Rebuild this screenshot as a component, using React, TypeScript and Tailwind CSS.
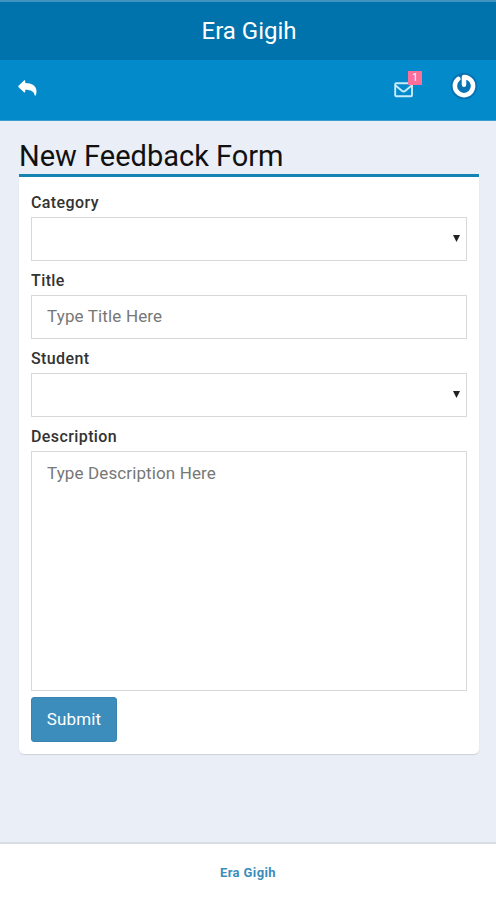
import type { ReactNode } from 'react'

const ReplyIcon = () => (
    <svg className="h-4 w-[19px] fill-white" viewBox="0 0 19 16">
        <path d="M6 .6c.6-.5 1.2-.2 1.2.5v2c6.600 0 11.300 2.900 11.300 8.200 0 1.400-.2 2.800-.6 4-.2.5-1.200.4-1.300-.2-.5-3.500-3.300-5.300-9.400-5.400v2.100c0 .7-.6 1-1.200.5L.6 7.200c-.5-.4-.5-1 0-1.400z" />
    </svg>
)

const EnvelopeIcon = () => (
    <svg className="h-[19px] w-[19px]" viewBox="0 0 19 19" fill="none" stroke="#c9ecfb" strokeWidth="1.9" strokeLinejoin="round">
        <rect x="1.2" y="3.2" width="16.8" height="13" rx="1" />
        <path d="M1.6 5.6l6.2 5.2q1.8 1.4 3.6 0l6.2-5.2" />
    </svg>
)

const AvatarIcon = () => (
    <svg className="h-7 w-7" viewBox="0 0 28 28" fill="none">
        <circle cx="14" cy="14" r="13.3" fill="#0872b3" />
        <path d="M14 12.8V4.9A9.1 9.1 0 1 1 8.400 6.800" stroke="#fff" strokeWidth="4.5" strokeLinecap="round" strokeLinejoin="round" />
    </svg>
)

const Field = ({ label, children }: { label: string; children: ReactNode }) => (
    <label className="block">
        <span className="mb-[3px] block text-base leading-[22px] font-medium tracking-[0.4px] text-[#333]">{label}</span>
        {children}
    </label>
)

const SelectBox = () => (
    <div className="relative">
        <select className="block h-11 w-full appearance-none border border-[#d6d8da] bg-white px-4" />
        <svg className="pointer-events-none absolute top-[18px] right-[7px] h-[7px] w-[7px] fill-[#222]" viewBox="0 0 7 7">
            <path d="M0 0h7L3.5 7z" />
        </svg>
    </div>
)

const App = () => {
    return (
        <div className="flex h-screen flex-col bg-[#eaeef6] font-['Roboto',sans-serif]">
            <header className="shrink-0 text-white">
                <div className="h-[60px] border-t-2 border-[#3f93c0] bg-[#0073ad] pl-[2px] text-center text-2xl leading-[58px]">
                    Era Gigih
                </div>
                <nav className="flex h-[61px] items-start justify-between border-b border-[#3b9dce] bg-[#038aca] px-[18px]">
                    <button className="mt-5" aria-label="Back">
                        <ReplyIcon />
                    </button>
                    <div className="flex items-start">
                        <button className="relative mt-5 mr-[37px]" aria-label="Messages">
                            <EnvelopeIcon />
                            <span className="absolute -top-[9px] left-[14px] h-[14px] w-[14px] bg-[#fb6f98] text-center text-[10px] leading-[14px]">
                                1
                            </span>
                        </button>
                        <button className="mt-3" aria-label="Account">
                            <AvatarIcon />
                        </button>
                    </div>
                </nav>
            </header>

            <main className="flex-1 pt-[18px] pr-[17px] pl-[19px]">
                <h1 className="h-[35px] text-[29px] leading-[35px] text-[#111]">New Feedback Form</h1>

                <form className="h-[580px] rounded-b-[5px] border-t-[3px] border-[#1484b2] bg-white px-3 pt-[15px] shadow-[0_1px_1px_rgba(0,0,0,0.12)]">
                    <div className="grid gap-[9px]">
                        <Field label="Category">
                            <SelectBox />
                        </Field>
                        <Field label="Title">
                            <input
                                className="block h-11 w-full border border-[#d6d8da] px-[15px] pb-[2px] text-[17px] tracking-[0.15px] placeholder:text-[#777]"
                                placeholder="Type Title Here"
                            />
                        </Field>
                        <Field label="Student">
                            <SelectBox />
                        </Field>
                        <Field label="Description">
                            <textarea
                                className="block h-60 w-full resize-none border border-[#d6d8da] px-[15px] py-[9px] text-[17px] leading-6 tracking-[0.12px] placeholder:text-[#777]"
                                placeholder="Type Description Here"
                            />
                        </Field>
                    </div>
                    <button
                        type="button"
                        className="mt-[6px] h-[45px] w-[86px] rounded-[3px] border border-[#3984b1] bg-[#3c8dbc] text-[17px] tracking-[0.15px] text-white"
                    >
                        Submit
                    </button>
                </form>
            </main>

            <footer className="h-[58px] shrink-0 border-t-2 border-[#d9dce5] bg-white text-center text-[13px] leading-[57px] font-bold tracking-[0.4px] text-[#3c8dbc]">
                Era Gigih
            </footer>
        </div>
    )
}

export default App
